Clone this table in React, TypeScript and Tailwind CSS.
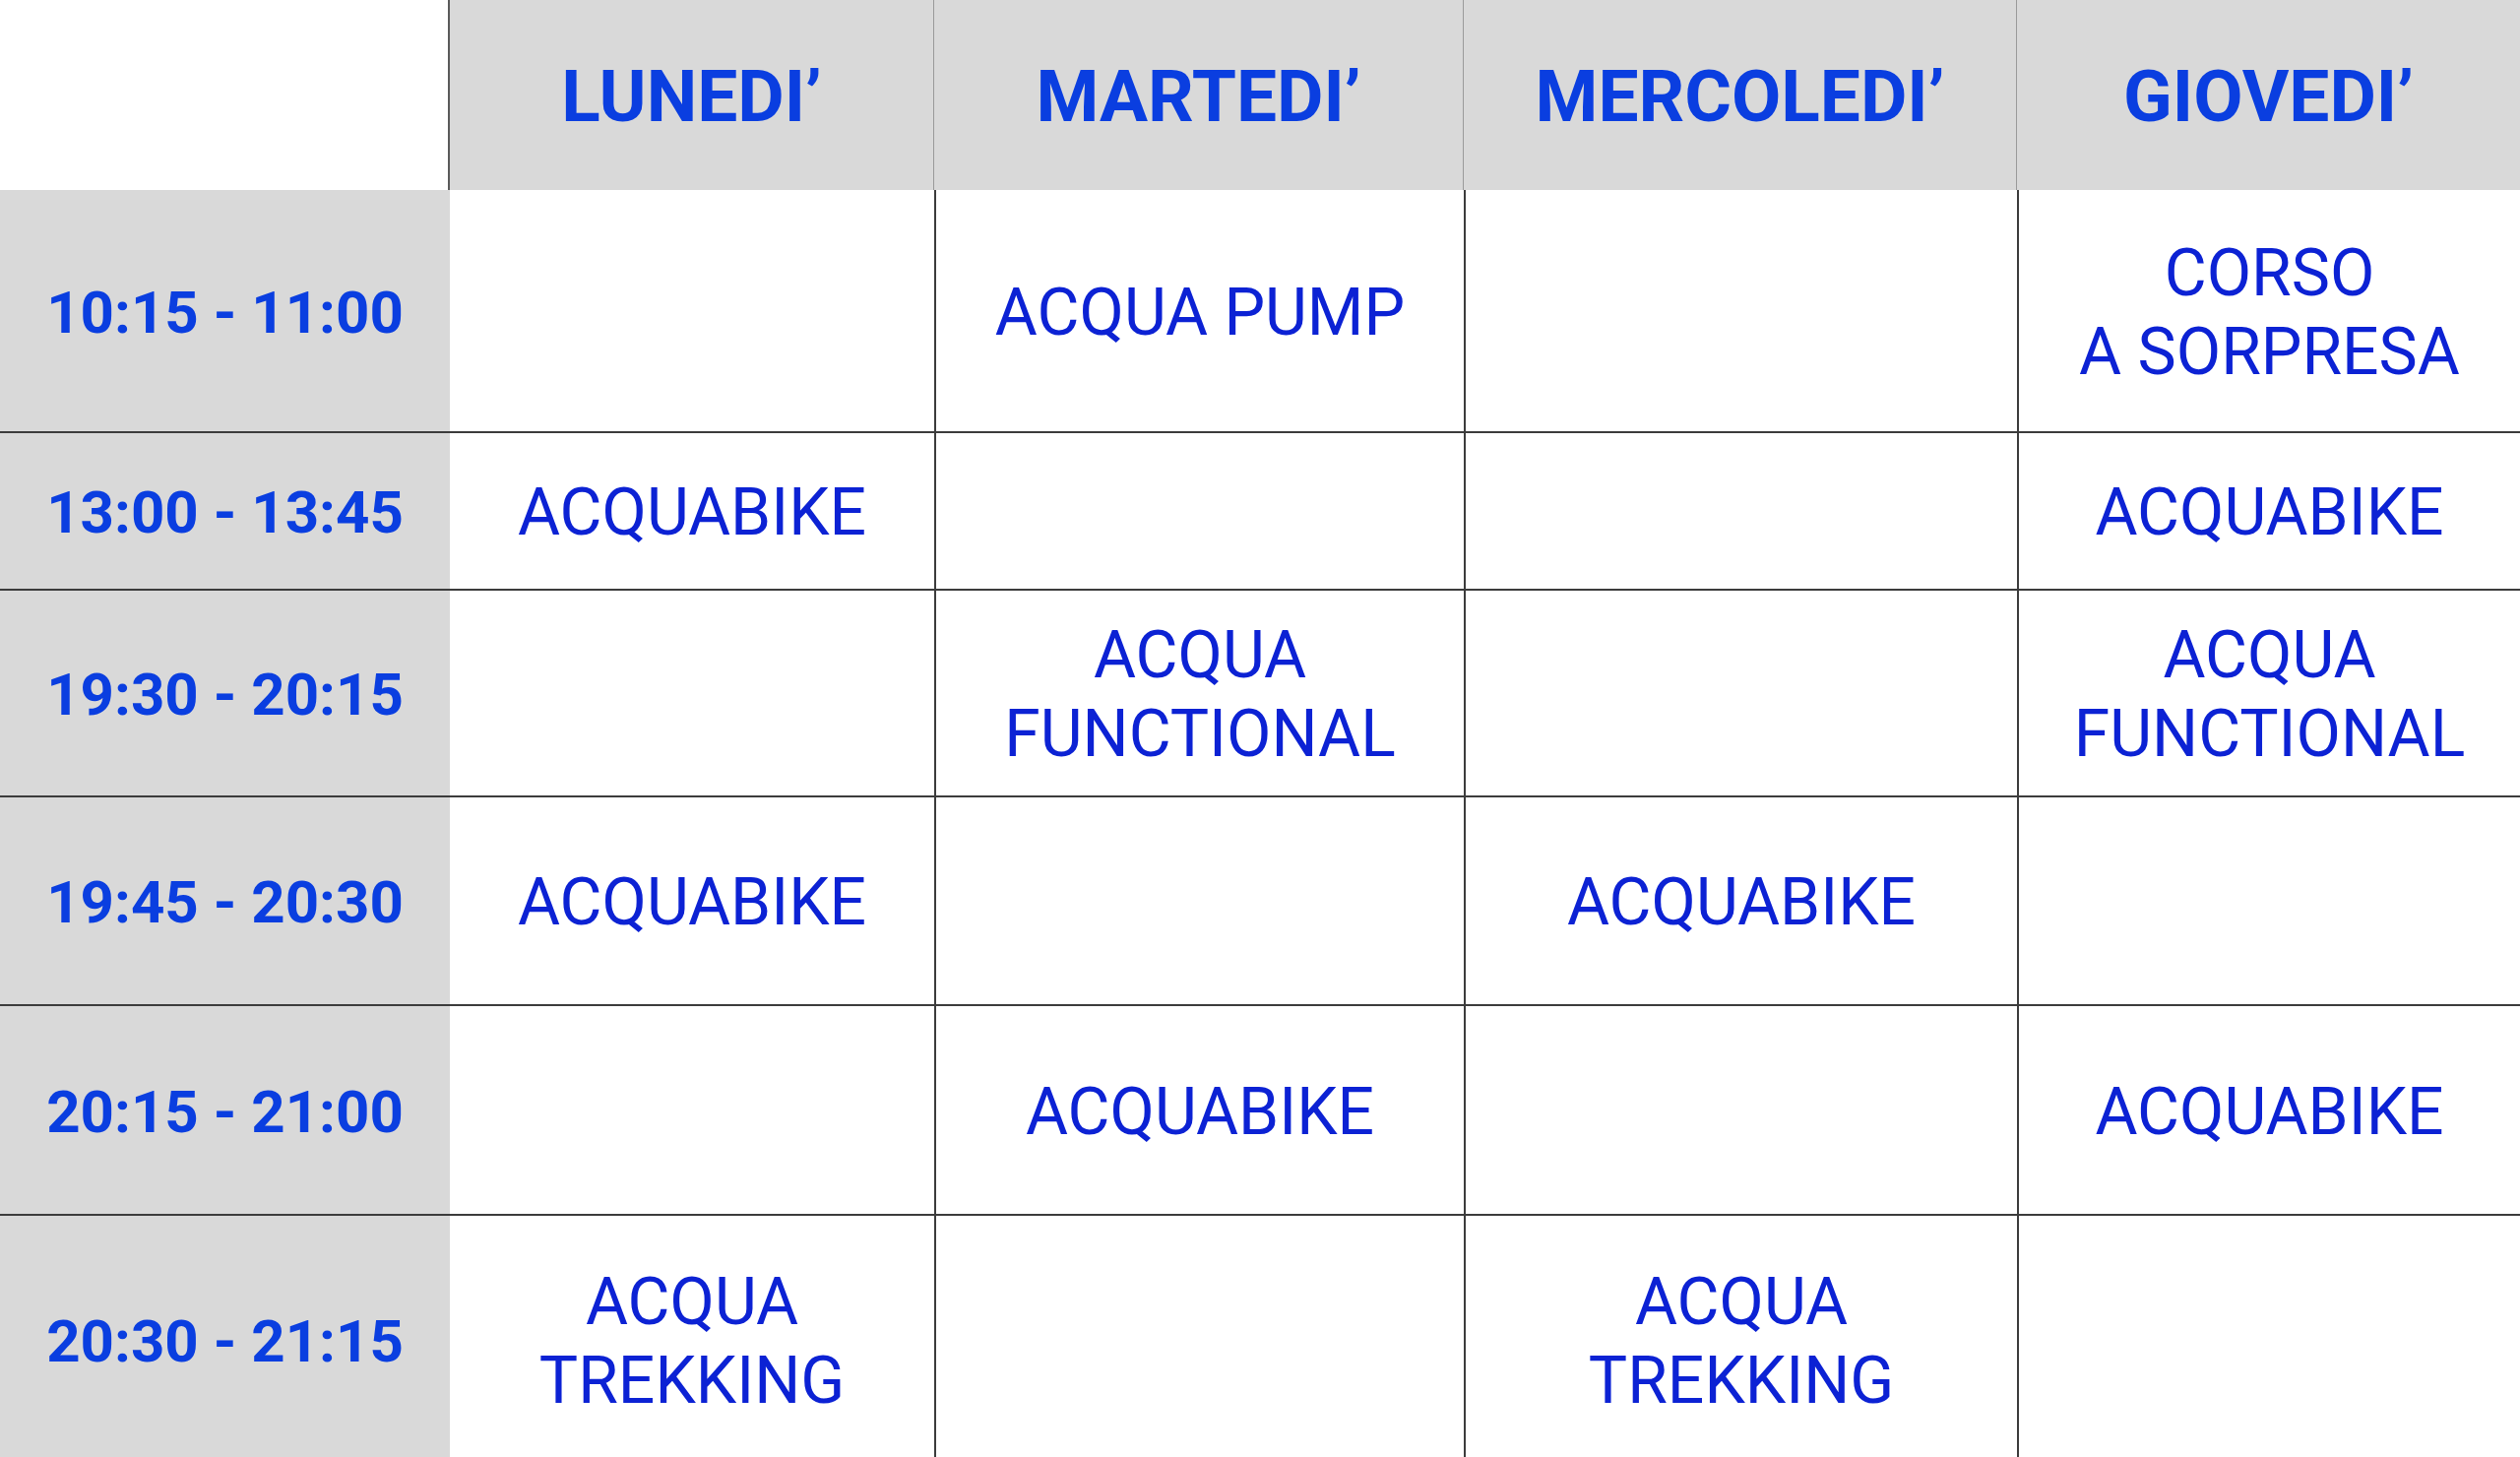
import React from 'react';

const DAYS = ['LUNEDI’', 'MARTEDI’', 'MERCOLEDI’', 'GIOVEDI’'];

type Row = { time: string; h: string; cells: string[][] };

const ROWS: Row[] = [
  { time: '10:15 - 11:00', h: 'h-[245px]', cells: [[], ['ACQUA PUMP'], [], ['CORSO', 'A SORPRESA']] },
  { time: '13:00 - 13:45', h: 'h-[160px]', cells: [['ACQUABIKE'], [], [], ['ACQUABIKE']] },
  { time: '19:30 - 20:15', h: 'h-[210px]', cells: [[], ['ACQUA', 'FUNCTIONAL'], [], ['ACQUA', 'FUNCTIONAL']] },
  { time: '19:45 - 20:30', h: 'h-[212px]', cells: [['ACQUABIKE'], [], ['ACQUABIKE'], []] },
  { time: '20:15 - 21:00', h: 'h-[213px]', cells: [[], ['ACQUABIKE'], [], ['ACQUABIKE']] },
  { time: '20:30 - 21:15', h: 'h-[254px]', cells: [['ACQUA', 'TREKKING'], [], ['ACQUA', 'TREKKING'], []] },
];

const COLS = 'grid grid-cols-[457px_492px_538px_562px_511px]';

export default function App() {
  return (
    <div className="w-[2560px] h-[1480px] overflow-hidden bg-white font-['Roboto',sans-serif]">
      {/* header */}
      <div className={`${COLS} h-[193px]`}>
        <div className="bg-white border-r-2 border-[#5a5a5a]" />
        {DAYS.map((d, i) => (
          <div
            key={d}
            className={`flex items-center justify-center bg-[#d9d9d9] ${i < 3 ? 'border-r border-[#9a9a9a]' : ''}`}
          >
            <span className="text-[73px] font-bold text-[#0a3ee0] leading-none pt-[4px]">{d}</span>
          </div>
        ))}
      </div>

      {/* rows */}
      {ROWS.map((row, r) => (
        <div key={row.time} className={`${COLS} ${row.h} ${r > 0 ? 'border-t-2 border-[#3c3c3c]' : ''}`}>
          <div className="flex items-center justify-center bg-[#d9d9d9] pt-[4px]">
            <span className="text-[60px] font-bold text-[#0a3ee0] leading-none">{row.time}</span>
          </div>
          {row.cells.map((lines, c) => (
            <div
              key={c}
              className={`flex flex-col items-center justify-center bg-white pt-[4px] ${c > 0 ? 'border-l-2 border-[#3c3c3c]' : ''}`}
            >
              {lines.map((l) => (
                <span key={l} className="text-[66px] leading-[80px] text-[#0c22d4] whitespace-nowrap">
                  {l}
                </span>
              ))}
            </div>
          ))}
        </div>
      ))}
    </div>
  );
}
